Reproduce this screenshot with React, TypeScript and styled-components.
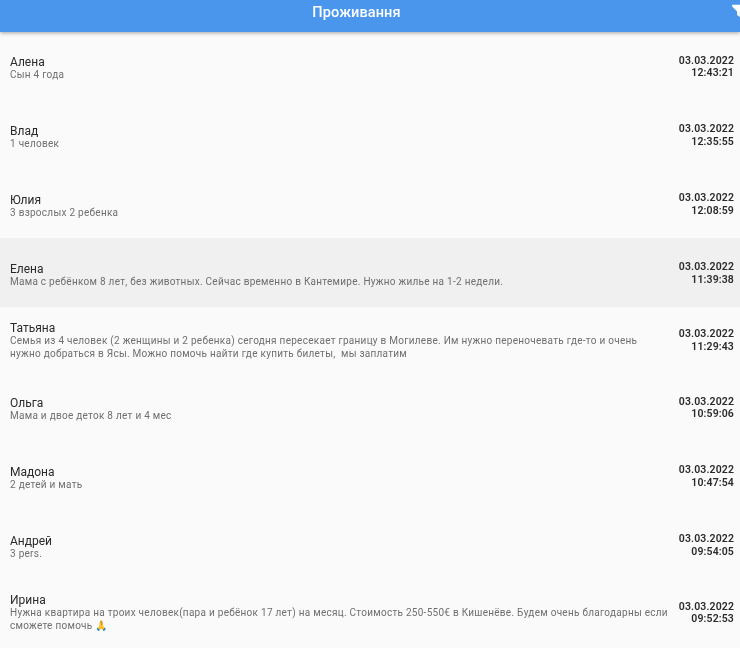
import { createGlobalStyle } from 'styled-components';
import styled from 'styled-components';

const items = [
  { name: 'Алена', text: 'Сын 4 года', date: '03.03.2022', time: '12:43:21' },
  { name: 'Влад', text: '1 человек', date: '03.03.2022', time: '12:35:55' },
  { name: 'Юлия', text: '3 взрослых 2 ребенка', date: '03.03.2022', time: '12:08:59' },
  {
    name: 'Елена',
    text: 'Мама с ребёнком 8 лет, без животных. Сейчас временно в Кантемире. Нужно жилье на 1-2 недели.',
    date: '03.03.2022',
    time: '11:39:38',
    active: true,
  },
  {
    name: 'Татьяна',
    text: 'Семья из 4 человек (2 женщины и 2 ребенка) сегодня пересекает границу в Могилеве. Им нужно переночевать где-то и очень нужно добраться в Ясы. Можно помочь найти где купить билеты,  мы заплатим',
    date: '03.03.2022',
    time: '11:29:43',
    long: true,
  },
  { name: 'Ольга', text: 'Мама и двое деток 8 лет и 4 мес', date: '03.03.2022', time: '10:59:06' },
  { name: 'Мадона', text: '2 детей и мать', date: '03.03.2022', time: '10:47:54' },
  { name: 'Андрей', text: '3 pers.', date: '03.03.2022', time: '09:54:05' },
  {
    name: 'Ирина',
    text: 'Нужна квартира на троих человек(пара и ребёнок 17 лет) на месяц. Стоимость 250-550€ в Кишенёве. Будем очень благодарны если сможете помочь 🙏',
    date: '03.03.2022',
    time: '09:52:53',
    long: true,
  },
];

const App = () => {
  return (
    <Wrapper>
      <GlobalStyle />
      <Header>
        <Title>Проживання</Title>
        <FilterIcon viewBox="0 0 24 24">
          <path d="M3 4h18v2.2l-7 7.3V21l-4-2.5v-5L3 6.2z" />
        </FilterIcon>
      </Header>
      <List>
        {items.map((item) => (
          <Row key={item.time} $active={item.active} $long={item.long}>
            <Info $long={item.long}>
              <Name>{item.name}</Name>
              <Text>{item.text}</Text>
            </Info>
            <Stamp>
              <div>{item.date}</div>
              <div>{item.time}</div>
            </Stamp>
          </Row>
        ))}
      </List>
    </Wrapper>
  );
};

const GlobalStyle = createGlobalStyle`
  html, body {
    margin: 0;
    height: 100%;
    overflow: hidden;
    background: #fafafa;
  }
`;
const Wrapper = styled.div`
  display: flex;
  flex-direction: column;
  height: 648px;
  overflow: hidden;
  font-family: Roboto, 'Liberation Sans', sans-serif;
  background: #fafafa;
  filter: blur(0.35px);
`;
const Header = styled.header`
  position: relative;
  z-index: 1;
  flex: none;
  display: flex;
  justify-content: center;
  align-items: center;
  box-sizing: border-box;
  height: 32px;
  padding: 0 27px 8px 0;
  background: #4a96ec;
  box-shadow: 0 1px 4px rgba(0, 0, 0, 0.35);
`;
const Title = styled.h1`
  margin: 0;
  font-size: 14.5px;
  font-weight: 500;
  color: #fff;
  letter-spacing: 0.1px;
`;
const FilterIcon = styled.svg`
  position: absolute;
  right: -7px;
  top: 2px;
  width: 17px;
  height: 17px;
  fill: #fff;
`;
const List = styled.main`
  flex: 1;
  display: flex;
  flex-direction: column;
`;
const Row = styled.div<{ $active?: boolean; $long?: boolean }>`
  flex: none;
  height: ${(p) => (p.$long ? '65.8px' : '68.8px')};
  box-sizing: border-box;
  display: flex;
  justify-content: space-between;
  align-items: center;
  gap: 10.5px;
  padding: 0 6px 0 10px;
  background: ${(p) => (p.$active ? '#f0f0f0' : 'transparent')};
`;
const Info = styled.div<{ $long?: boolean }>`
  flex: 1;
  min-width: 0;
  padding-top: ${(p) => (p.$long ? '1px' : '4px')};
`;
const Name = styled.div`
  font-size: 12px;
  line-height: 14px;
  color: #2a2a2a;
`;
const Text = styled.div`
  font-size: 10px;
  line-height: 12.5px;
  color: #6f6f6f;
  letter-spacing: 0.27px;
  white-space: pre-wrap;
`;
const Stamp = styled.div`
  flex: none;
  padding-top: 1.5px;
  text-align: right;
  font-size: 10.5px;
  line-height: 12.5px;
  font-weight: 600;
  color: #2a2a2a;
  letter-spacing: 0.12px;
`;

export default App;
